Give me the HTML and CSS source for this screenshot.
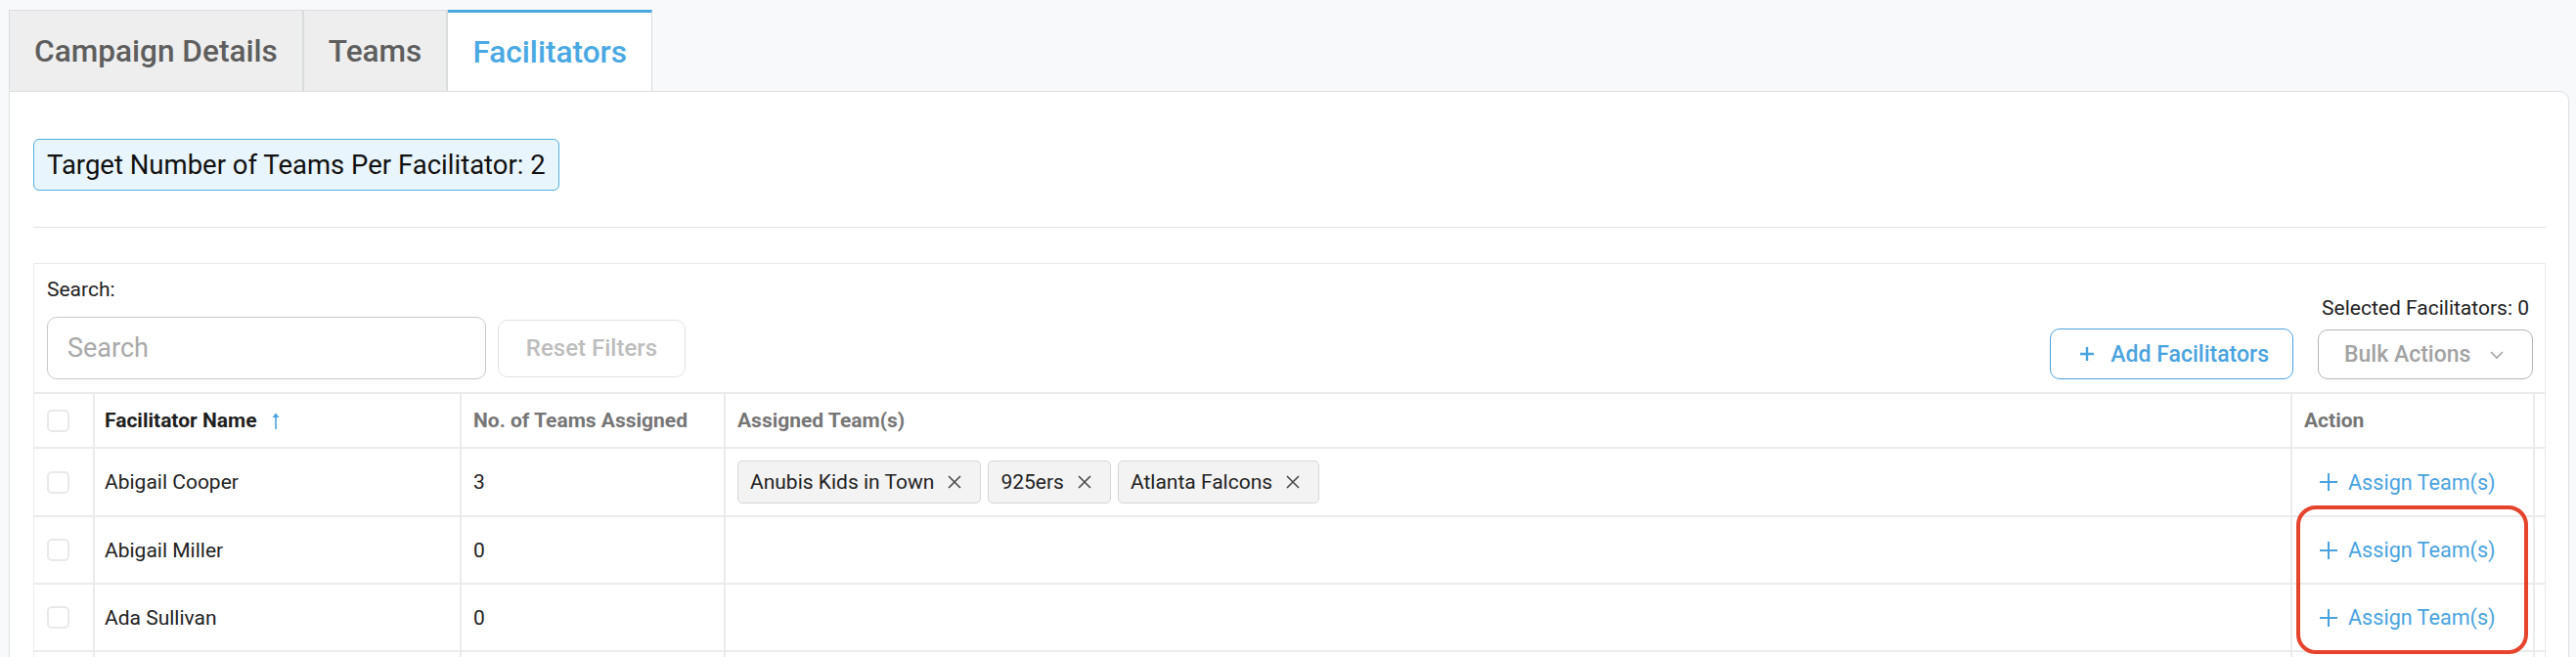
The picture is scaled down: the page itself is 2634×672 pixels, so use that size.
FILE: index.html
```html
<!DOCTYPE html>
<html lang="en">
<head>
  <meta charset="UTF-8">
  <title>Campaign Facilitators</title>
  <link rel="stylesheet" href="styles.css">
</head>
<body>
  <div class="page">
    <div class="tabs">
      <div class="tab">Campaign Details</div>
      <div class="tab">Teams</div>
      <div class="tab active">Facilitators</div>
    </div>

    <div class="panel">
      <div class="target">Target Number of Teams Per Facilitator: 2</div>
      <hr class="divider">

      <div class="table-box">
        <!-- toolbar -->
        <div class="toolbar">
          <div class="search-group">
            <label class="search-label" for="search">Search:</label>
            <div class="search-row">
              <input id="search" class="search-input" type="text" placeholder="Search">
              <button class="btn-reset">Reset Filters</button>
            </div>
          </div>
          <div class="right-tools">
            <button class="btn-add">
              <svg width="16" height="16" viewBox="0 0 16 16"><path d="M8 1v14M1 8h14" stroke="currentColor" stroke-width="2.4" fill="none"/></svg>
              Add Facilitators
            </button>
            <div class="bulk">
              <div class="selected">Selected Facilitators: 0</div>
              <button class="btn-bulk">
                Bulk Actions
                <svg width="14" height="8" viewBox="0 0 14 8"><path d="M1 1l6 6 6-6" stroke="currentColor" stroke-width="1.6" fill="none"/></svg>
              </button>
            </div>
          </div>
        </div>

        <!-- table -->
        <div class="row head">
          <div class="cell"><span class="check"></span></div>
          <div class="cell name-cell sorted">Facilitator Name
            <svg class="sort" width="8" height="17" viewBox="0 0 8 17"><path d="M4 4v13" stroke="currentColor" stroke-width="1.6"/><path d="M0.5 5L4 0.5 7.5 5z" fill="currentColor"/></svg>
          </div>
          <div class="cell">No. of Teams Assigned</div>
          <div class="cell">Assigned Team(s)</div>
          <div class="cell">Action</div>
          <div class="cell"></div>
        </div>

        <div class="row">
          <div class="cell"><span class="check"></span></div>
          <div class="cell name-cell">Abigail Cooper</div>
          <div class="cell">3</div>
          <div class="cell">
            <div class="chips">
              <span class="chip">Anubis Kids in Town
                <svg width="14" height="14" viewBox="0 0 14 14"><path d="M1 1l12 12M13 1L1 13" stroke="currentColor" stroke-width="1.6"/></svg>
              </span>
              <span class="chip">925ers
                <svg width="14" height="14" viewBox="0 0 14 14"><path d="M1 1l12 12M13 1L1 13" stroke="currentColor" stroke-width="1.6"/></svg>
              </span>
              <span class="chip">Atlanta Falcons
                <svg width="14" height="14" viewBox="0 0 14 14"><path d="M1 1l12 12M13 1L1 13" stroke="currentColor" stroke-width="1.6"/></svg>
              </span>
            </div>
          </div>
          <div class="cell">
            <a class="assign" href="#">
              <svg width="18" height="18" viewBox="0 0 18 18"><path d="M9 0v18M0 9h18" stroke="currentColor" stroke-width="2"/></svg>
              Assign Team(s)
            </a>
          </div>
          <div class="cell"></div>
        </div>

        <div class="row">
          <div class="cell"><span class="check"></span></div>
          <div class="cell name-cell">Abigail Miller</div>
          <div class="cell">0</div>
          <div class="cell"></div>
          <div class="cell">
            <a class="assign" href="#">
              <svg width="18" height="18" viewBox="0 0 18 18"><path d="M9 0v18M0 9h18" stroke="currentColor" stroke-width="2"/></svg>
              Assign Team(s)
            </a>
          </div>
          <div class="cell"></div>
        </div>

        <div class="row">
          <div class="cell"><span class="check"></span></div>
          <div class="cell name-cell">Ada Sullivan</div>
          <div class="cell">0</div>
          <div class="cell"></div>
          <div class="cell">
            <a class="assign" href="#">
              <svg width="18" height="18" viewBox="0 0 18 18"><path d="M9 0v18M0 9h18" stroke="currentColor" stroke-width="2"/></svg>
              Assign Team(s)
            </a>
          </div>
          <div class="cell"></div>
        </div>

        <div class="row">
          <div class="cell"><span class="check"></span></div>
          <div class="cell name-cell"></div>
          <div class="cell"></div>
          <div class="cell"></div>
          <div class="cell"></div>
          <div class="cell"></div>
        </div>
      </div>
    </div>

    <!-- annotation around the assign buttons -->
    <div class="highlight"></div>
  </div>
</body>
</html>
```

FILE: styles.css
```css
* {
  box-sizing: border-box;
}

html,
body {
  margin: 0;
  overflow: hidden;
}

body {
  font-family: Roboto, "Liberation Sans", sans-serif;
  font-size: 21px;
  background: #f8f9fb;
  color: #222222;
}

.page {
  position: relative;
  height: 672px;
  overflow: hidden;
  padding: 10px 7px 0 9px;
}

/* tabs */
.tabs {
  display: flex;
}

.tab {
  height: 83px;
  padding: 0 25px;
  display: flex;
  align-items: center;
  font-size: 31.6px;
  font-weight: 500;
  color: #5e5e5e;
  background: #eeeeee;
  border-top: 1px solid #d9dbde;
  border-right: 2px solid #d9dbde;
}

.tab:first-child {
  border-left: 1px solid #d9dbde;
}

.tab.active {
  background: #ffffff;
  color: #4aa8e3;
  border-top: 3px solid #4aa8e3;
  border-right: 1px solid #d9dbde;
}

/* panel */
.panel {
  background: #ffffff;
  border: 1px solid #dcdee2;
  border-radius: 0 10px 0 0;
  padding: 48px 23px 0 24px;
  height: 600px;
}

.target {
  display: inline-block;
  height: 53px;
  line-height: 51px;
  padding: 0 13px;
  font-size: 27.5px;
  color: #111111;
  background: #e9f5fc;
  border: 1px solid #55aee3;
  border-radius: 6px;
}

.divider {
  height: 1px;
  border: none;
  background: #e4e4e4;
  margin: 37px 0 36px;
}

.table-box {
  border: 1px solid #ebebeb;
}

/* toolbar */
.toolbar {
  display: flex;
  justify-content: space-between;
  align-items: flex-end;
  padding: 14px 12px 13px 13px;
}

.search-label {
  display: block;
  line-height: 24px;
  margin-bottom: 16px;
}

.search-row {
  display: flex;
  align-items: center;
  gap: 12px;
}

.search-input {
  width: 449px;
  height: 64px;
  border: 1px solid #c9c9c9;
  border-radius: 10px;
  padding: 0 20px;
  font-family: Roboto, sans-serif;
  font-size: 27px;
  color: #222222;
  outline: none;
}

.search-input::placeholder {
  color: #a9a9a9;
}

.btn-reset {
  width: 192px;
  height: 59px;
  border: 1px solid #e2e2e2;
  border-radius: 10px;
  background: #ffffff;
  color: #bdbdbd;
  font-family: Roboto, sans-serif;
  font-size: 24px;
  font-weight: 500;
}

.right-tools {
  display: flex;
  align-items: flex-end;
  gap: 25px;
}

.btn-add {
  height: 52px;
  padding: 0 24px 0 29px;
  display: flex;
  align-items: center;
  gap: 16px;
  border: 1px solid #4aa3df;
  border-radius: 10px;
  background: #ffffff;
  color: #4aa3df;
  font-family: Roboto, sans-serif;
  font-size: 23px;
  font-weight: 500;
}

.bulk {
  display: flex;
  flex-direction: column;
  align-items: flex-end;
}

.selected {
  line-height: 24px;
  padding-right: 4px;
  margin-bottom: 10px;
}

.btn-bulk {
  width: 220px;
  height: 51px;
  padding: 0 29px 0 26px;
  display: flex;
  align-items: center;
  justify-content: space-between;
  border: 1px solid #b5b5b5;
  border-radius: 10px;
  background: #ffffff;
  color: #a3a3a3;
  font-family: Roboto, sans-serif;
  font-size: 23px;
  font-weight: 500;
}

/* table rows */
.row {
  display: grid;
  grid-template-columns: 60px 375px 270px 1fr 248px 12px;
  border-top: 2px solid #ebebeb;
}

.cell {
  display: flex;
  align-items: center;
  min-height: 67px;
  padding: 12px;
  border-left: 2px solid #ebebeb;
}

.cell:first-child {
  border-left: none;
  padding-left: 13px;
}

.name-cell {
  padding-left: 10px;
}

.row.head .cell {
  min-height: 54px;
  padding-top: 0;
  padding-bottom: 0;
  font-weight: 700;
  color: #767676;
}

.row.head .sorted {
  color: #1f1f1f;
}

.sort {
  margin-left: 15px;
  color: #4aa3df;
}

.check {
  width: 23px;
  height: 23px;
  border: 2px solid #e9e9e9;
  border-radius: 5px;
  background: #ffffff;
}

.chips {
  display: flex;
  gap: 7px;
}

.chip {
  display: inline-flex;
  align-items: center;
  gap: 14px;
  height: 44px;
  padding: 0 19px 0 12px;
  background: #f3f3f3;
  border: 1px solid #d6d6d6;
  border-radius: 5px;
  color: #222222;
}

.chip svg {
  color: #4a4a4a;
}

.assign {
  display: flex;
  align-items: center;
  gap: 11px;
  padding-left: 16px;
  font-size: 21.6px;
  color: #4aa3df;
  text-decoration: none;
}

/* red annotation box */
.highlight {
  position: absolute;
  left: 2348px;
  top: 517px;
  width: 237px;
  height: 152px;
  border: 4px solid #e6432d;
  border-radius: 20px;
}
```
